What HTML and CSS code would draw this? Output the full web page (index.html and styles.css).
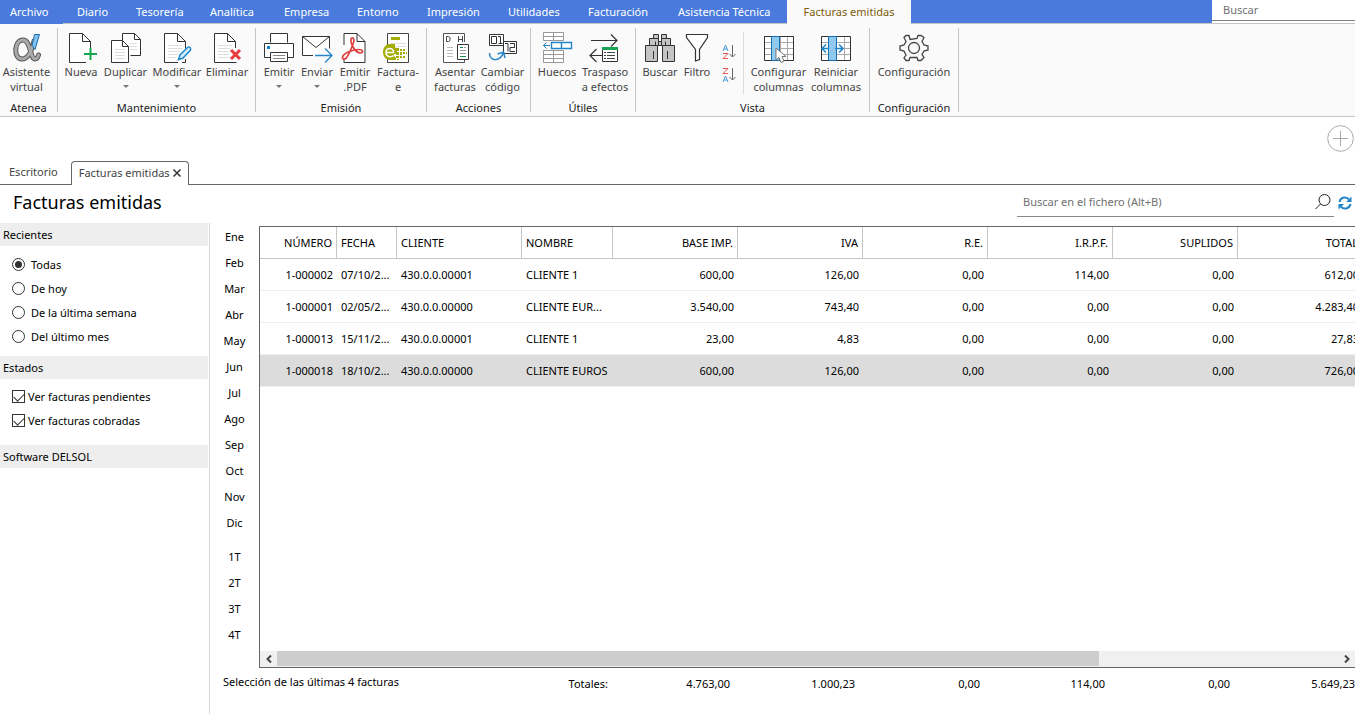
FILE: index.html
```html
<!DOCTYPE html>
<html lang="es">
<head>
<meta charset="utf-8">
<meta name="viewport" content="width=device-width, initial-scale=1">
<title>Facturas emitidas</title>
<link rel="stylesheet" href="styles.css">
</head>
<body>
<header>
  <div class="topbar">
    <nav class="menu" aria-label="Menú principal">
      <a href="#">Archivo</a><a href="#">Diario</a><a href="#">Tesorería</a><a href="#">Analítica</a><a href="#">Empresa</a><a href="#">Entorno</a><a href="#">Impresión</a><a href="#">Utilidades</a><a href="#">Facturación</a><a href="#">Asistencia Técnica</a><a href="#" class="current" aria-current="page">Facturas emitidas</a>
    </nav>
    <div class="quick-search"><input type="search" placeholder="Buscar" aria-label="Buscar"></div>
  </div>

  <div class="ribbon">
    <section class="group atenea">
      <div class="tools">
        <button class="tool" type="button">
          <svg class="icon" viewBox="0 0 32 32"><g fill="none" stroke-linecap="round"><path d="M23 9c-2 9-6 18-12 18-9 0-8-19 1-19 8 0 7 19 12 19 2 0 3-2 3.500-4" stroke="#555" stroke-width="5"/><path d="M23 9c-2 9-6 18-12 18-9 0-8-19 1-19 8 0 7 19 12 19 2 0 3-2 3.500-4" stroke="#aaa" stroke-width="3"/></g><path d="M23.500 2.500h5L24 17.500l-3-4z" fill="#7fc0ee" stroke="#1d6fa8"/></svg>
          <span>Asistente<br>virtual</span></button>
      </div>
      <h2>Atenea</h2>
    </section>

    <section class="group mantenimiento">
      <div class="tools">
        <button class="tool" type="button">
          <svg class="icon" viewBox="0 0 32 32"><path d="M21 30.500H4.500v-29h13l8 8V18M17.500 1.500v8h8" fill="#fff" stroke="#333"/><path d="M25.500 16v12M19 22h13" stroke="#12a84e" stroke-width="2"/></svg>
          <span>Nueva</span></button>
        <button class="tool" type="button">
          <svg class="icon" viewBox="0 0 32 32"><path d="M12.500 8V1.500h12l6 6v16h-10" fill="#fff" stroke="#333"/><path d="M24.500 1.500v6h6" fill="none" stroke="#333"/><path d="M20 11.500h7M20 14.500h7M20 17.500h7" stroke="#ddd"/><path d="M1.500 8.500h11l6 6v16h-17z" fill="#fff" stroke="#333"/><path d="M12.500 8.500v6h6" fill="none" stroke="#333"/><path d="M5 17.500h10M5 20.500h10M5 23.500h10M5 26.500h10" stroke="#ddd"/></svg>
          <span>Duplicar</span><i class="caret"></i></button>
        <button class="tool" type="button">
          <svg class="icon" viewBox="0 0 32 32"><path d="M17 30.500H3.500v-29h13l8 8v7M16.500 1.500v8h8" fill="#fff" stroke="#333"/><path d="M24.500 27v3.500H21" fill="none" stroke="#333"/><path d="M7 13.500h14M7 16.500h14M7 19.500h12M7 22.500h10M7 25.500h8" stroke="#ddd"/><path d="M17.500 27.500l1.500-4.500 7.500-7.500q1.500-1 2.500 0t.5 2.500L22 26z" fill="#d9eefb" stroke="#1e88cc" stroke-width="1.500"/></svg>
          <span>Modificar</span><i class="caret"></i></button>
        <button class="tool" type="button">
          <svg class="icon" viewBox="0 0 32 32"><path d="M25.500 30.500h-22v-29h13l8 8V16M16.500 1.500v8h8" fill="#fff" stroke="#333"/><path d="M7 13.500h14M7 16.500h12M7 19.500h10M7 22.500h11M7 25.500h10" stroke="#ddd"/><path d="M19.500 17.500l9 9M28.500 17.500l-9 9" stroke="#fafafa" stroke-width="5"/><path d="M20 18l9 9M29 18l-9 9" stroke="#e83b3b" stroke-width="3"/></svg>
          <span>Eliminar</span></button>
      </div>
      <h2>Mantenimiento</h2>
    </section>

    <section class="group emision">
      <div class="tools">
        <button class="tool" type="button">
          <svg class="icon" viewBox="0 0 32 32"><g fill="#fff" stroke="#333"><path d="M7.500 10.500v-9h17v9"/><path d="M7.500 25.500h-6v-14h29v14h-6"/><path d="M7.500 20.500h17v9h-17z"/></g><path d="M10 23.500h12M10 26.500h12" stroke="#888"/><path d="M4 14h3v3H4z" fill="#1583cc"/></svg>
          <span>Emitir</span><i class="caret"></i></button>
        <button class="tool" type="button">
          <svg class="icon" viewBox="0 0 32 32"><path d="M12 23.500H1.500v-19h27v12" fill="#fff" stroke="#333"/><path d="M1.500 4.500L15 15.500l13.500-11" fill="none" stroke="#333"/><path d="M14 23.500h17M24 16.500l7 7-7 7" fill="none" stroke="#2486c8" stroke-width="1.300"/></svg>
          <span>Enviar</span><i class="caret"></i></button>
        <button class="tool" type="button">
          <svg class="icon" viewBox="0 0 32 32"><path d="M5 13V1.500h13l8 8v21H5V27M18 1.500v8h8" fill="#fff" stroke="#333"/><path d="M14 6c-3-1-2.500 4-.5 8s5 7 8 7c3 0 3-3.500-2-3.500S6 20.500 4 24s2 4.500 4 1c3-4 6-13 7-16 0-1.500 0-2.500-1-3z" fill="none" stroke="#df4141" stroke-width="1.700"/></svg>
          <span>Emitir<br>.PDF</span></button>
        <button class="tool" type="button">
          <svg class="icon" viewBox="0 0 32 32"><path d="M5.500 1.500h21v29h-21z" fill="#fff" stroke="#444"/><path d="M9 5h9v3H9z" fill="#a4ad00"/><path d="M9 11.500h15M14 14.500h10" stroke="#ddd"/><path d="M14 16h3v3h-3zM14 20h3v3h-3zM14 24h3v2h-3zM18 17h2v2h-2zM18 20h2v3h-2zM18 24h2v2h-2zM21 17h2v2h-2zM21 20h2v2h-2zM21 24h2v2h-2zM24 20h1v2h-1zM15 27h2v1h-2z" fill="#a4ad00"/><path d="M7 12h6v3l2 2v5h-3v2l2 2v2H7c-4-1-6-4-6-8s2-7 6-8z" fill="#a4ad00"/><path d="M4.500 20.500h7c.5-5.500-7.500-5.500-7.500 0 0 4.500 5 5 7.500 3" fill="none" stroke="#fff" stroke-width="1.500"/></svg>
          <span>Factura-<br>e</span></button>
      </div>
      <h2>Emisión</h2>
    </section>

    <section class="group acciones">
      <div class="tools">
        <button class="tool" type="button">
          <svg class="icon" viewBox="0 0 32 32"><path d="M25.500 10V1.500h-21v29h21V28" fill="#fff" stroke="#555"/><path d="M7.500 4.500v5h2l1.500-1v-3l-1.500-1zM19.500 4v6M23.500 4v6M19.500 7.500h4" fill="none" stroke="#444"/><path d="M8 15.500h6M8 18.500h6M8 21.500h6M8 24.500h6" stroke="#bbb"/><path d="M18.500 12.500h11v15h-11z" fill="#fff" stroke="#333"/><path d="M21 15.500h3M21 24.500h6" stroke="#12934c"/><path d="M25 15.500h2M21 18.500h6M21 21.500h6" stroke="#999"/></svg>
          <span>Asentar<br>facturas</span></button>
        <button class="tool" type="button">
          <svg class="icon" viewBox="0 0 32 32"><g fill="#fff" stroke="#333"><path d="M2.500 2.500h14v11h-14z"/><path d="M4.500 4.500h5v7h-5zM11 4.500h2.500v7M11.500 11.500h4"/><path d="M16.500 9.500h13v12h-13z"/><path d="M18 11.500h3v8M23 11.500h4.500v4H23v4h5" fill="none"/></g><path d="M2.500 21c0 9 11 9 14-1M10.500 22l6-2 1.500 6" fill="none" stroke="#2486c8" stroke-width="1.500"/></svg>
          <span>Cambiar<br>código</span></button>
      </div>
      <h2>Acciones</h2>
    </section>

    <section class="group utiles">
      <div class="tools">
        <button class="tool" type="button">
          <svg class="icon" viewBox="0 0 32 32"><path d="M2.500.5h20v8h-20zM12.500.5v8M2.500 4.500h20M2.500 18.500h20v12h-20zM12.500 18.500v12M2.500 22.500h20M2.500 26.500h20" fill="#fff" stroke="#999"/><path d="M10.500 10.500h20v6h-20zM20.500 10.500v6" fill="#fff" stroke="#2486c8" stroke-width="1.400"/><path d="M9 13.500H2M5.500 10.500l-3 3 3 3" fill="none" stroke="#2486c8"/></svg>
          <span>Huecos</span></button>
        <button class="tool" type="button">
          <svg class="icon" viewBox="0 0 32 32"><path d="M2 8.500h26M22 2.500l6 6-6 6M15 23.500H1M7.500 17l-6.500 6.500L7.500 30" fill="none" stroke="#333" stroke-width="1.200"/><path d="M13.500 15.500h15v14h-15z" fill="#fff" stroke="#333"/><path d="M13 15h16v3H13z" fill="#1aa353"/><path d="M15 20.500h2M15 23.500h2M15 26.500h2M18 20.500h8M18 23.500h8M18 26.500h8" stroke="#444"/></svg>
          <span>Traspaso<br>a efectos</span></button>
      </div>
      <h2>Útiles</h2>
    </section>

    <section class="group vista">
      <div class="tools">
        <button class="tool" type="button">
          <svg class="icon" viewBox="0 0 32 32"><g fill="#c4c4c4" stroke="#333"><path d="M9.500 2.500h5v4h-5zM17.500 2.500h5v4h-5zM5.500 6.500h9v7h-9zM17.500 6.500h9v7h-9zM14.500 9.500h3v4h-3zM1.500 13.500h12v16h-12zM18.500 13.500h12v16h-12z"/><path d="M11.500 9.500v4M21.500 9.500v4M9.500 19v8M23.500 19v8" fill="none"/></g></svg>
          <span>Buscar</span></button>
        <button class="tool" type="button">
          <svg class="icon" viewBox="0 0 32 32"><path d="M5.500 2.500h21v3l-8 12v10l-4 1.500V17.500l-9-12z" fill="#fff" stroke="#333" stroke-width="1.200"/></svg>
          <span>Filtro</span></button>
        <div class="sorts">
          <button type="button" aria-label="Orden ascendente"><svg viewBox="0 0 16 16"><path d="M2 7l2.500-6L7 7M3 5h3" fill="none" stroke="#4b9bd4"/><path d="M2 9.500h5l-5 5h5" fill="none" stroke="#e05858"/><path d="M11.500 1v12M8.500 10l3 3 3-3" fill="none" stroke="#666"/></svg></button>
          <button type="button" aria-label="Orden descendente"><svg viewBox="0 0 16 16"><path d="M2 1.500h5l-5 5h5" fill="none" stroke="#e05858"/><path d="M2 15l2.500-6L7 15M3 13h3" fill="none" stroke="#4b9bd4"/><path d="M11.500 1v12M8.500 10l3 3 3-3" fill="none" stroke="#666"/></svg></button>
        </div>
        <button class="tool divided" type="button">
          <svg class="icon" viewBox="0 0 32 32"><path d="M1.500 4.500h29v24h-29zM2 10.500h28M2 16.500h28M2 22.500h28M17.500 5v23M24.500 5v23" fill="#fff" stroke="#aaa"/><path d="M1.500 4.500h29v24h-29z" fill="none" stroke="#333"/><path d="M8.500 4.500h8v24h-8z" fill="#8fc9ee" stroke="#176fb0"/><path d="M13 16v12l3-2.500 2 5 3-1.500-2-4.500h4z" fill="#fff" stroke="#777"/></svg>
          <span>Configurar<br>columnas</span></button>
        <button class="tool" type="button">
          <svg class="icon" viewBox="0 0 32 32"><path d="M1.500 4.500h29v24h-29zM2 10.500h28M2 16.500h28M2 22.500h28M8.500 5v23M24.500 5v23" fill="#fff" stroke="#aaa"/><path d="M1.500 4.500h29v24h-29z" fill="none" stroke="#333"/><path d="M8.500 4.500h8v24h-8z" fill="#8fc9ee" stroke="#176fb0"/><path d="M9 16.500H2.500M6 12.500l-4 4 4 4M15 16.500h8M19 12.500l4 4-4 4" fill="none" stroke="#1b86cc" stroke-width="1.500"/></svg>
          <span>Reiniciar<br>columnas</span></button>
      </div>
      <h2>Vista</h2>
    </section>

    <section class="group configuracion">
      <div class="tools">
        <button class="tool" type="button">
          <svg class="icon" viewBox="0 0 32 32"><g fill="none" stroke="#444" stroke-width="1.300"><path d="M12 7.500l-1-4h-3l-2 2 2 4-2 3.500-4 1v4l4 1 2 4-2 3 2 2.500h3l1-3h7l1 3h3l3-3-2-3 2-3.500 4-1v-4l-4-1-2-3.500 2-4-3-2h-3l-1 3z"/><circle cx="16" cy="16" r="5.500"/></g></svg>
          <span>Configuración</span></button>
      </div>
      <h2>Configuración</h2>
    </section>
  </div>
</header>

<div class="quick-add">
  <button type="button" aria-label="Añadir"><svg viewBox="0 0 28 28"><circle cx="14.500" cy="14.500" r="12.800"/><path d="M14.500 7v15M7 14.500h15"/></svg></button>
</div>

<nav class="tabs" aria-label="Pestañas">
  <a href="#" class="tab">Escritorio</a>
  <div class="tab active"><a href="#">Facturas emitidas</a><button type="button" aria-label="Cerrar"><svg viewBox="0 0 10 10"><path d="M1.500 1.500l7 7M8.500 1.500l-7 7"/></svg></button></div>
  <span class="tabs-rest"></span>
</nav>

<div class="title-row">
  <h1>Facturas emitidas</h1>
  <div class="file-search">
    <input type="search" placeholder="Buscar en el fichero (Alt+B)" aria-label="Buscar en el fichero">
    <button type="button" aria-label="Buscar"><svg viewBox="0 0 18 18"><circle cx="10.500" cy="7" r="5.500"/><path d="M6.500 11L1.500 16"/></svg></button>
  </div>
  <button class="refresh" type="button" aria-label="Actualizar"><svg viewBox="0 0 14 14"><path d="M1.500 6C2.500 1 8.500 0 11 3.500M12.500 8c-1 5-7 6-9.500 2.500" fill="none" stroke="#2486c8" stroke-width="2"/><path d="M13.500.5v5.500H8zM.5 13.500V8H6z" fill="#2486c8"/></svg></button>
</div>

<main class="workspace">
  <aside class="sidebar">
    <h2>Recientes</h2>
    <div class="options recent">
      <label><input type="radio" name="recientes" checked>Todas</label>
      <label><input type="radio" name="recientes">De hoy</label>
      <label><input type="radio" name="recientes">De la última semana</label>
      <label><input type="radio" name="recientes">Del último mes</label>
    </div>
    <h2>Estados</h2>
    <div class="options states">
      <label><input type="checkbox" checked>Ver facturas pendientes</label>
      <label><input type="checkbox" checked>Ver facturas cobradas</label>
    </div>
    <h2>Software DELSOL</h2>
  </aside>

  <div class="content">
    <nav class="periods" aria-label="Periodos">
      <a href="#">Ene</a><a href="#">Feb</a><a href="#">Mar</a><a href="#">Abr</a><a href="#">May</a><a href="#">Jun</a><a href="#">Jul</a><a href="#">Ago</a><a href="#">Sep</a><a href="#">Oct</a><a href="#">Nov</a><a href="#">Dic</a>
      <a href="#" class="quarter">1T</a><a href="#">2T</a><a href="#">3T</a><a href="#">4T</a>
    </nav>
    <div class="grid-panel">
      <div class="grid-view">
        <table>
          <colgroup><col class="c-num"><col class="c-date"><col class="c-client"><col class="c-name"><col class="c-amount" span="6"></colgroup>
          <thead><tr><th class="num">NÚMERO</th><th>FECHA</th><th>CLIENTE</th><th>NOMBRE</th><th class="num">BASE IMP.</th><th class="num">IVA</th><th class="num">R.E.</th><th class="num">I.R.P.F.</th><th class="num">SUPLIDOS</th><th class="num">TOTAL</th></tr></thead>
          <tbody>
            <tr><td class="num">1-000002</td><td>07/10/2...</td><td>430.0.0.00001</td><td>CLIENTE 1</td><td class="num">600,00</td><td class="num">126,00</td><td class="num">0,00</td><td class="num">114,00</td><td class="num">0,00</td><td class="num">612,00</td></tr>
            <tr><td class="num">1-000001</td><td>02/05/2...</td><td>430.0.0.00000</td><td>CLIENTE EUR...</td><td class="num">3.540,00</td><td class="num">743,40</td><td class="num">0,00</td><td class="num">0,00</td><td class="num">0,00</td><td class="num">4.283,40</td></tr>
            <tr><td class="num">1-000013</td><td>15/11/2...</td><td>430.0.0.00001</td><td>CLIENTE 1</td><td class="num">23,00</td><td class="num">4,83</td><td class="num">0,00</td><td class="num">0,00</td><td class="num">0,00</td><td class="num">27,83</td></tr>
            <tr class="selected"><td class="num">1-000018</td><td>18/10/2...</td><td>430.0.0.00000</td><td>CLIENTE EUROS</td><td class="num">600,00</td><td class="num">126,00</td><td class="num">0,00</td><td class="num">0,00</td><td class="num">0,00</td><td class="num">726,00</td></tr>
          </tbody>
        </table>
      </div>
      <div class="scrollbar">
        <button type="button" aria-label="Desplazar a la izquierda"><svg viewBox="0 0 8 8"><path d="M6 .5L2.500 4 6 7.500"/></svg></button>
        <div class="track"><div class="thumb"></div></div>
        <button type="button" aria-label="Desplazar a la derecha"><svg viewBox="0 0 8 8"><path d="M2 .5L5.500 4 2 7.500"/></svg></button>
      </div>
    </div>
    <footer class="totals">
      <span class="summary">Selección de las últimas 4 facturas</span>
      <span>Totales:</span><span>4.763,00</span><span>1.000,23</span><span>0,00</span><span>114,00</span><span>0,00</span><span>5.649,23</span>
    </footer>
  </div>
</main>
</body>
</html>
```

FILE: styles.css
```css
* { box-sizing: border-box; }

body {
  margin: 0;
  min-height: 100vh;
  display: flex;
  flex-direction: column;
  overflow: hidden;
  background: #fff;
  color: #000;
  font: 11px/16px "Noto Sans", "Open Sans", sans-serif;
}

a { color: inherit; text-decoration: none; }
h1, h2 { margin: 0; font-weight: 400; }
svg { display: block; }

button {
  padding: 0;
  border: 0;
  background: none;
  color: inherit;
  font: inherit;
}

input { font: inherit; }

/* Menu bar */
.topbar {
  display: flex;
  justify-content: space-between;
  height: 24px;
  background: #4a7bdc;
  box-shadow: inset 0 -1px #c6c6c6;
}

.menu {
  display: grid;
  grid-template-columns: 63px 59px 74px 74px 73px 70px 81px 80px 90px 123px 124px;
  color: #fff;
  line-height: 24px;
  white-space: nowrap;
}

.menu a { padding-left: 14px; }
.menu a:first-child { padding-left: 10px; background: #4a7bdc; }
.menu .current { padding-left: 0; text-align: center; background: #fafafa; color: #7d5a0a; }

.quick-search { width: 143px; height: 23px; background: #fff; }

.quick-search input {
  display: block;
  width: 100%;
  height: 21px;
  padding: 0 11px 2px;
  border: 0;
  border-bottom: 1px solid #808080;
  background: none;
}

.quick-search input::placeholder, .file-search input::placeholder { color: #707070; opacity: 1; }

/* Ribbon */
.ribbon {
  display: flex;
  height: 93px;
  padding: 4px 0;
  border-bottom: 1px solid #c6c6c6;
  background: #fafafa;
  color: #444;
}

.group {
  display: flex;
  flex-direction: column;
  justify-content: space-between;
  border-right: 1px solid #c6c6c6;
}

.group h2 { color: #222; font-size: 11px; line-height: 8px; text-align: center; }
.tools { display: grid; padding: 4px 4px 0; }
.atenea .tools { grid-template-columns: 53px; padding-left: 0; }
.mantenimiento .tools { grid-template-columns: 38px 51px 52px 48px; }
.emision .tools { grid-template-columns: 38px 38px 38px 48px; }
.acciones .tools { grid-template-columns: 48px 47px; }
.utiles .tools { grid-template-columns: 46px 50px; padding-right: 5px; padding-left: 3px; }
.vista .tools { grid-template-columns: 40px 34px 29px 64px 58px; }
.configuracion .tools { grid-template-columns: 88px; padding-right: 0; padding-left: 0; }

.tool {
  display: flex;
  flex-direction: column;
  align-items: center;
  height: 62px;
  line-height: 15px;
  white-space: nowrap;
}

.tool .icon { flex: none; width: 32px; height: 32px; }
.divided { padding-left: 6px; border-left: 1px solid #ddd; }

.caret {
  margin-top: 6px;
  border: 3px solid transparent;
  border-top-color: #777;
  border-bottom: 0;
}

.sorts { display: grid; align-content: start; justify-content: center; gap: 7px; padding-top: 12px; }
.sorts svg { width: 16px; height: 16px; }

/* Quick add strip and tabs */
.quick-add { display: flex; justify-content: flex-end; height: 44px; padding: 7px 1px 0 0; }
.quick-add button { width: 28px; height: 28px; }
.quick-add svg { fill: none; stroke: #aaa; }

.tabs { display: flex; height: 24px; color: #444; }
.tab { height: 24px; padding: 0 13px 0 9px; border-bottom: 1px solid #666; line-height: 22px; }

.active {
  display: flex;
  align-items: center;
  gap: 2px;
  padding: 0 6px 1px 7px;
  border: 1px solid #666;
  border-bottom: 0;
  border-radius: 4px 4px 0 0;
}

.active svg { width: 10px; height: 10px; fill: none; stroke: #333; stroke-width: 1.5; }
.tabs-rest { flex: 1; border-bottom: 1px solid #666; }

/* Title and file search */
.title-row { display: flex; height: 38px; padding-right: 3px; }
h1 { flex: 1; padding-left: 13px; font-size: 18px; line-height: 35px; }

.file-search {
  display: flex;
  align-items: center;
  width: 317px;
  height: 32px;
  border-bottom: 1px solid #888;
}

.file-search input { flex: 1; min-width: 0; padding: 3px 6px 0; border: 0; background: none; }
.file-search svg { width: 18px; height: 18px; margin: 3px 2px 0 0; fill: none; stroke: #222; }
.refresh { width: 14px; height: 36px; margin-left: 4px; }
.refresh svg { width: 14px; height: 14px; }

/* Workspace */
.workspace { display: flex; flex: 1; }
.sidebar { flex: none; width: 210px; padding-right: 1px; border-right: 1px solid #d8d8d8; }
.sidebar h2 { height: 23px; padding-left: 3px; background: #eee; font-size: 11px; line-height: 23px; }
.options { display: flex; flex-direction: column; padding-left: 12px; }
.recent { padding-top: 7px; padding-bottom: 7px; }
.states { padding-top: 6px; padding-bottom: 12px; }
.options label { display: flex; align-items: center; height: 24px; }

.options input {
  appearance: none;
  display: grid;
  place-content: center;
  width: 13px;
  height: 13px;
  margin: 0 0 1px;
  border: 1px solid #333;
  background: #fff;
}

.recent label { gap: 6px; }
.states label { gap: 3px; }
.recent input { border-radius: 50%; }
.recent input:checked::before { content: ""; width: 7px; height: 7px; border-radius: 50%; background: #333; }

.states input:checked::before {
  content: "";
  width: 9px;
  height: 5px;
  margin-bottom: 2px;
  border: solid #333;
  border-width: 0 0 1px 1px;
  transform: rotate(-45deg);
}

.content {
  display: grid;
  grid-template-columns: 49px minmax(0, 1fr);
  grid-template-rows: 1fr 46px;
  flex: 1;
  min-width: 0;
}

.periods { display: flex; flex-direction: column; padding-top: 1px; text-align: center; }
.periods a { height: 26px; line-height: 26px; }
.periods .quarter { margin-top: 8px; }

.grid-panel {
  display: flex;
  flex-direction: column;
  margin-top: 3px;
  border: 1px solid #666;
  border-right: 0;
}

.grid-view { flex: 1; overflow: hidden; }
table { width: 1103px; border-collapse: separate; border-spacing: 0; table-layout: fixed; }
.c-num { width: 77px; }
.c-date { width: 60px; }
.c-client { width: 125px; }
.c-name { width: 91px; }
.c-amount { width: 125px; }
th, td { height: 32px; padding: 0 4px; font-weight: 400; text-align: left; white-space: nowrap; }
th { border-right: 1px solid #c6c6c6; border-bottom: 1px solid #c6c6c6; }
td { border-bottom: 1px solid #eee; }
.num { text-align: right; }
.selected td { background: #dcdcdc; }

.scrollbar { display: flex; height: 16px; background: #f0f0f0; }
.scrollbar button { display: grid; place-content: center; width: 17px; height: 16px; }
.scrollbar svg { width: 8px; height: 8px; fill: none; stroke: #444; stroke-width: 2; }
.track { flex: 1; }
.thumb { width: 77.500%; height: 15px; background: #cdcdcd; }

.totals {
  display: grid;
  grid-column: 1 / -1;
  grid-template-columns: minmax(0, 1fr) 52px 122px repeat(5, 125px);
  padding-top: 8px;
  text-align: right;
}

.summary { margin-top: -2px; padding-left: 13px; text-align: left; }
```
